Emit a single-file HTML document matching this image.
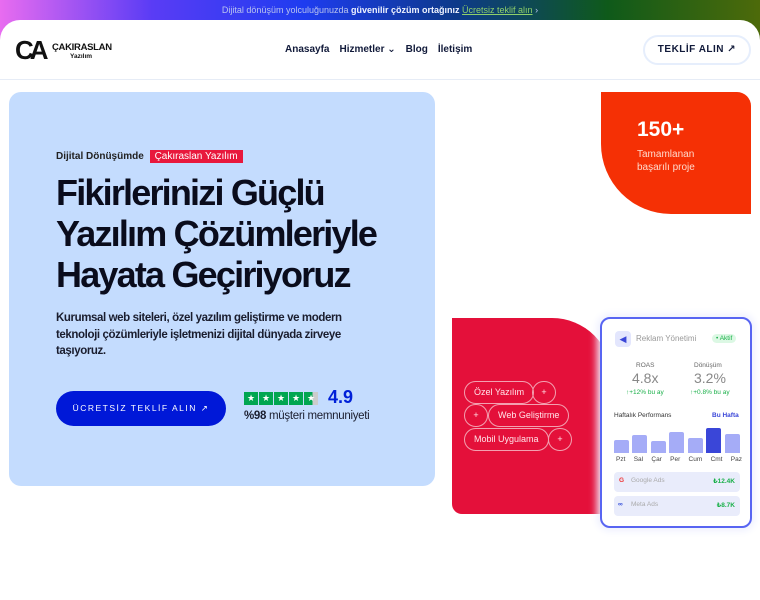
<!DOCTYPE html>
<html><head><meta charset="utf-8"><style>
*{margin:0;padding:0;box-sizing:border-box}
body{width:760px;height:600px;overflow:hidden;background:#fff;font-family:"Liberation Sans","DejaVu Sans",sans-serif;position:relative}
.top{position:absolute;left:0;top:0;width:760px;height:40px;background:linear-gradient(90deg,#e86cf0 0%,#5a3cf5 20%,#1e3cf0 40%,#0d3a8a 60%,#0f5a1a 80%,#4d6a0a 100%)}
.top p{position:absolute;top:5px;width:100%;text-align:center;font-size:9px;color:#b9c4ef}
.top b{color:#f0f4ff}
.top u{color:#8fd06a;font-weight:normal}
.hdr{position:absolute;left:0;top:20px;width:760px;height:60px;background:#fff;border-radius:20px 20px 0 0;border-bottom:1px solid #e6ecf6}
.nav{position:absolute;top:24px;left:285px;font-size:10px;font-weight:bold;color:#111a3a}
.nav span{margin-right:10px}
.btn1{position:absolute;left:643px;top:15px;width:108px;height:30px;border:2px solid #e6eefc;border-radius:15px;font-size:10px;font-weight:bold;color:#111a3a;text-align:center;line-height:26px;letter-spacing:.5px}
.hero{position:absolute;left:9px;top:92px;width:426px;height:394px;background:#c4dcfe;border-radius:12px}
.h1{position:absolute;left:47px;top:80px;font-size:36px;font-weight:bold;color:#0a0c1c;line-height:41px;letter-spacing:-1.8px}
.tag{position:absolute;left:47px;top:59px;font-size:10px;font-weight:bold;color:#222}
.tag i{font-style:normal;font-weight:normal;background:#e8183c;color:#fff;padding:1px 5px;margin-left:3px}
.p{position:absolute;left:47px;top:218px;font-size:11.5px;line-height:16.5px;color:#1a1d2e;width:320px;font-weight:bold;letter-spacing:-.4px}
.cta{position:absolute;left:47px;top:299px;width:170px;height:35px;background:#0018d8;border-radius:18px;color:#fff;font-size:8.5px;letter-spacing:1.5px;text-align:center;line-height:35px}
.stars{position:absolute;left:235px;top:300px;display:flex;gap:1px}
.stars div{width:14px;height:13px;background:#00a651;color:#fff;font-size:9px;text-align:center;line-height:13px}
.rt{position:absolute;left:319px;top:295px;font-size:18px;font-weight:bold;color:#0020d8}
.sat{position:absolute;left:235px;top:318px;font-size:11.5px;color:#1a1d2e;letter-spacing:-.3px}
.org{position:absolute;left:601px;top:92px;width:150px;height:122px;background:#f53005;border-radius:0 14px 0 70px;color:#fff}
.red{position:absolute;left:452px;top:318px;width:160px;height:196px;background:#e4103a;border-radius:0 60px 0 10px}
.pill{position:absolute;height:23px;border:1px solid #f3a0b0;border-radius:12px;color:#ffe5ea;font-size:9px;line-height:21px;padding:0 9px}
.card{position:absolute;left:600px;top:317px;width:152px;height:211px;background:#fff;border:2px solid #5865f2;border-radius:10px;box-shadow:0 0 8px 3px #eef0fe;font-size:6.5px;color:#666}
.bar{position:absolute;bottom:0;width:15px;background:#a5acf7;border-radius:2px 2px 0 0}
</style></head><body>
<div class="top"><p>Dijital dönüşüm yolculuğunuzda <b>güvenilir çözüm ortağınız</b> <u>Ücretsiz teklif alın</u> ›</p></div>
<div class="hdr">
 <div style="position:absolute;left:15px;top:17px;width:36px;height:26px;font-size:26px;font-weight:bold;color:#111;line-height:26px;letter-spacing:-4px">CA</div>
 <div style="position:absolute;left:52px;top:22px;font-size:9.5px;font-weight:bold;color:#111;letter-spacing:-.3px">ÇAKIRASLAN</div>
 <div style="position:absolute;left:70px;top:33px;font-size:6.5px;font-weight:bold;color:#111">Yazılım</div>
 <div class="nav"><span>Anasayfa</span><span>Hizmetler ⌄</span><span>Blog</span><span>İletişim</span></div>
 <div class="btn1">TEKLİF ALIN ↗</div>
</div>
<div class="hero">
 <div class="tag">Dijital Dönüşümde <i>Çakıraslan Yazılım</i></div>
 <div class="h1">Fikirlerinizi Güçlü<br>Yazılım Çözümleriyle<br>Hayata Geçiriyoruz</div>
 <div class="p">Kurumsal web siteleri, özel yazılım geliştirme ve modern teknoloji çözümleriyle işletmenizi dijital dünyada zirveye taşıyoruz.</div>
 <div class="cta">ÜCRETSİZ TEKLİF ALIN ↗</div>
 <div class="stars"><div>★</div><div>★</div><div>★</div><div>★</div><div style="background:linear-gradient(90deg,#00a651 60%,#ccc 60%)">★</div></div>
 <div class="rt">4.9</div>
 <div class="sat"><b>%98</b> müşteri memnuniyeti</div>
</div>
<div class="org"><div style="position:absolute;left:36px;top:26px;font-size:21px;font-weight:bold">150+</div><div style="position:absolute;left:36px;top:56px;font-size:10px;line-height:13px;color:#ffd9cc">Tamamlanan<br>başarılı proje</div></div>
<div class="red"></div>
<div class="pill" style="left:464px;top:381px">Özel Yazılım</div>
<div class="pill" style="left:532px;top:381px;width:24px;padding:0;text-align:center">+</div>
<div class="pill" style="left:464px;top:404px;width:24px;padding:0;text-align:center">+</div>
<div class="pill" style="left:488px;top:404px">Web Geliştirme</div>
<div class="pill" style="left:464px;top:428px">Mobil Uygulama</div>
<div class="pill" style="left:548px;top:428px;width:24px;padding:0;text-align:center">+</div>
<div class="card">
 <div style="position:absolute;left:13px;top:12px;width:16px;height:16px;background:#e3e6fd;border-radius:4px;color:#3a46d8;font-size:9px;text-align:center;line-height:16px">◀</div>
 <div style="position:absolute;left:34px;top:15px;font-size:8px;color:#999">Reklam Yönetimi</div>
 <div style="position:absolute;left:110px;top:15px;background:#dcf8e4;color:#1bb04a;border-radius:6px;padding:1px 4px">• Aktif</div>
 <div style="position:absolute;left:34px;top:43px">ROAS</div><div style="position:absolute;left:30px;top:51px;font-size:14px;color:#888">4.8x</div><div style="position:absolute;left:24px;top:70px;color:#1bb04a">↑+12% bu ay</div>
 <div style="position:absolute;left:92px;top:43px">Dönüşüm</div><div style="position:absolute;left:92px;top:51px;font-size:14px;color:#888">3.2%</div><div style="position:absolute;left:88px;top:70px;color:#1bb04a">↑+0.8% bu ay</div>
 <div style="position:absolute;left:12px;top:93px;color:#333">Haftalık Performans</div><div style="position:absolute;left:110px;top:93px;color:#3a46d8;font-weight:bold">Bu Hafta</div>
 <div style="position:absolute;left:12px;top:106px;width:126px;height:28px">
  <div class="bar" style="left:0;height:13px"></div><div class="bar" style="left:18px;height:18px"></div><div class="bar" style="left:37px;height:12px"></div><div class="bar" style="left:55px;height:21px"></div><div class="bar" style="left:74px;height:15px"></div><div class="bar" style="left:92px;height:25px;background:#3a46d8"></div><div class="bar" style="left:111px;height:19px"></div>
 </div>
 <div style="position:absolute;left:14px;top:137px;width:126px;display:flex;justify-content:space-between;color:#444"><span>Pzt</span><span>Sal</span><span>Çar</span><span>Per</span><span>Cum</span><span>Cmt</span><span>Paz</span></div>
 <div style="position:absolute;left:12px;top:153px;width:126px;height:20px;background:#e9ecfb;border-radius:4px"><span style="position:absolute;left:5px;top:5px;color:#e33;font-weight:bold">G</span><span style="position:absolute;left:17px;top:5px;color:#aaa">Google Ads</span><span style="position:absolute;right:5px;top:5px;color:#1bb04a;font-weight:bold">₺12.4K</span></div>
 <div style="position:absolute;left:12px;top:177px;width:126px;height:20px;background:#e9ecfb;border-radius:4px"><span style="position:absolute;left:4px;top:5px;color:#2a46d8;font-weight:bold">∞</span><span style="position:absolute;left:17px;top:5px;color:#aaa">Meta Ads</span><span style="position:absolute;right:5px;top:5px;color:#1bb04a;font-weight:bold">₺8.7K</span></div>
</div>
</body></html>
